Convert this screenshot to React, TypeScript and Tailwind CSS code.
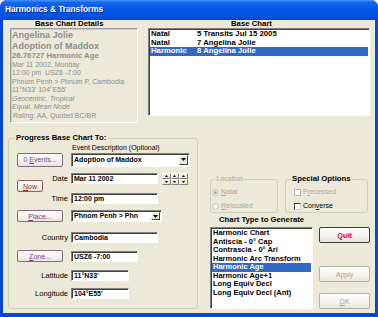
import React from "react";

const sunken =
  "border border-t-[#808080] border-l-[#808080] border-b-white border-r-white shadow-[inset_1px_1px_0_#404040]";

function Arrow() {
  return (
    <div className="w-[9px] h-full shrink-0 bg-[#ECE9D8] border border-t-white border-l-white border-b-[#404040] border-r-[#404040] flex items-center justify-center">
      <svg width="5" height="3" viewBox="0 0 5 3">
        <path d="M0 0H5L2.5 3Z" fill="#000" />
      </svg>
    </div>
  );
}

function Spin({ up }: { up: boolean }) {
  return (
    <div className="bg-[#ECE9D8] border border-t-white border-l-white border-b-[#808080] border-r-[#808080] flex items-center justify-center">
      <svg width="3" height="2" viewBox="0 0 3 2">
        <path d={up ? "M0 2H3L1.5 0Z" : "M0 0H3L1.5 2Z"} fill="#000" />
      </svg>
    </div>
  );
}

function Field({ cls, children }: { cls: string; children: React.ReactNode }) {
  return (
    <div
      className={`${cls} h-[11px] bg-white ${sunken} text-[7px] font-bold leading-[9px] pl-[2px] whitespace-nowrap overflow-hidden text-black`}
    >
      {children}
    </div>
  );
}

function Btn({ cls, children }: { cls: string; children: React.ReactNode }) {
  return (
    <div
      className={`${cls} shrink-0 flex items-center justify-center rounded-[2px] border text-[7px] leading-none bg-[linear-gradient(180deg,#fefefd_0%,#f4f3ee_60%,#e6e4da_100%)]`}
    >
      <span className="whitespace-pre">{children}</span>
    </div>
  );
}

function Label({ cls, children }: { cls: string; children: React.ReactNode }) {
  return (
    <div className={`${cls} shrink-0 text-right text-[7.5px] leading-[8px] text-black whitespace-nowrap`}>
      {children}
    </div>
  );
}

const chartTypes = [
  "Harmonic Chart",
  "Antiscia - 0° Cap",
  "Contrascia - 0° Ari",
  "Harmonic Arc Transform",
  "Harmonic Age",
  "Harmonic Age+1",
  "Long Equiv Decl",
  "Long Equiv Decl (Ant)",
];

const baseCharts = [
  ["Natal", "5 Transits Jul 15 2005"],
  ["Natal", "7 Angelina Jolie"],
  ["Harmonic", "8 Angelina Jolie"],
];

export default function App() {
  return (
    <div className="w-[378px] h-[317px] flex flex-col bg-[#0a46d6] rounded-t-[7px] overflow-hidden font-['Liberation_Sans',Arial,sans-serif]">
      {/* title bar */}
      <div className="h-[20px] shrink-0 flex items-center pl-[5px] bg-[linear-gradient(180deg,#4a97fb_0%,#1467ee_12%,#0558e8_45%,#0453e2_80%,#0a44c8_100%)]">
        <span className="text-white font-bold text-[8.25px] leading-none [text-shadow:1px_1px_0_#0b2a8a]">
          Harmonics &amp; Transforms
        </span>
      </div>

      {/* body */}
      <div className="flex-1 mx-[3px] mb-[4px] bg-[#ECE9D8] flex flex-col text-black">
        {/* top section */}
        <div className="flex">
          <div className="ml-[7px] w-[128px] shrink-0">
            <div className="h-[8px] leading-[8px] text-[7.75px] font-bold pl-[25px] whitespace-nowrap">
              Base Chart Details
            </div>
            <div className="h-[95px] border border-t-[#9d9d9d] border-l-[#9d9d9d] border-b-white border-r-white shadow-[inset_1px_1px_0_#c9c7b8] pt-[1px] pl-[1px] text-[#8e8e8e] whitespace-nowrap overflow-hidden">
              <div className="text-[9px] font-bold leading-[11px]">Angelina Jolie</div>
              <div className="text-[9px] font-bold leading-[11px]">Adoption of Maddox</div>
              <div className="text-[7.75px] font-bold leading-[8.5px]">26.76727 Harmonic Age</div>
              <div className="text-[7px] leading-[8.5px]">Mar 11 2002, Monday</div>
              <div className="text-[7px] leading-[8.5px] whitespace-pre">12:00 pm  USZ6 -7:00</div>
              <div className="text-[7px] leading-[8.5px]">Phnom Penh &gt; Phnum P, Cambodia</div>
              <div className="text-[7px] leading-[8.5px]">11°N33' 104°E55'</div>
              <div className="text-[7px] leading-[8.5px] italic">Geocentric, Tropical</div>
              <div className="text-[7px] leading-[8.5px] italic">Equal, Mean Node</div>
              <div className="text-[7px] leading-[8.5px] pl-[1px]">Rating: AA, Quoted BC/BR</div>
            </div>
          </div>

          <div className="ml-[10px] w-[222px] shrink-0">
            <div className="h-[8px] leading-[8px] text-[7.75px] font-bold pl-[83px] whitespace-nowrap">
              Base Chart
            </div>
            <div className={`h-[88px] bg-white ${sunken} p-[1px]`}>
              {baseCharts.map(([a, b], i) => (
                <div
                  key={i}
                  className={`flex h-[8.5px] leading-[8.5px] text-[7.75px] font-bold whitespace-nowrap ${
                    i === 2 ? "bg-[#316ac5] text-white" : "text-black"
                  }`}
                >
                  <div className="w-[47px] pl-[1px] shrink-0">{a}</div>
                  <div>{b}</div>
                </div>
              ))}
            </div>
          </div>
        </div>

        {/* bottom section */}
        <div className="flex items-start mt-[11px]">
          <fieldset className="ml-[5px] w-[190px] h-[175px] shrink-0 border border-[#d0d0bf] rounded-[3px]">
            <legend className="ml-[5px] px-[2px] text-[7.75px] font-bold leading-[8px] whitespace-nowrap">
              Progress Base Chart To:
            </legend>

            <div className="mt-[2px] ml-[63px] text-[7px] leading-[8px] whitespace-nowrap">
              Event Description (Optional)
            </div>

            <div className="flex items-center h-[15px]">
              <Btn cls="ml-[8px] w-[46px] h-[14px] border-[#7d6f80] text-[#7e3a86]">
                0 <span className="underline">E</span>vents...
              </Btn>
              <div className={`ml-[8px] w-[119px] h-[14px] bg-white ${sunken} flex items-stretch p-[1px]`}>
                <div className="flex-1 text-[7px] font-bold leading-[10px] pl-[1px] whitespace-nowrap overflow-hidden">
                  Adoption of Maddox
                </div>
                <Arrow />
              </div>
            </div>

            <div className="flex mt-[6px]">
              <div className="w-[35px] shrink-0">
                <Btn cls="ml-[8px] mt-[7px] w-[26px] h-[12px] border-[#9a5a50] text-[#9b2a30]">
                  <span className="underline">N</span>ow
                </Btn>
              </div>
              <div className="flex flex-col">
                <div className="flex items-center h-[11px]">
                  <Label cls="w-[24px]">Date</Label>
                  <Field cls="ml-[3px] w-[87px]">Mar 11 2002</Field>
                  <div className="ml-[4px] w-[26px] h-[12px] grid grid-cols-3 grid-rows-2">
                    <Spin up />
                    <Spin up />
                    <Spin up />
                    <Spin up={false} />
                    <Spin up={false} />
                    <Spin up={false} />
                  </div>
                </div>
                <div className="flex items-center h-[11px] mt-[9px]">
                  <Label cls="w-[24px]">Time</Label>
                  <Field cls="ml-[3px] w-[87px]">12:00 pm</Field>
                </div>
              </div>
            </div>

            <div className="flex items-center h-[12px] mt-[6px]">
              <Btn cls="ml-[8px] w-[46px] h-[12px] border-[#7d6f80] text-[#7e3a86]">
                <span className="underline">P</span>lace...
              </Btn>
              <div className={`ml-[8px] w-[91px] h-[12px] bg-white ${sunken} flex items-stretch p-[1px]`}>
                <div className="flex-1 text-[7px] font-bold leading-[8px] pl-[1px] whitespace-nowrap overflow-hidden">
                  Phnom Penh &gt; Phn
                </div>
                <Arrow />
              </div>
            </div>

            <div className="flex items-center h-[11px] mt-[10px]">
              <Label cls="w-[59px]">Country</Label>
              <Field cls="ml-[3px] w-[87px]">Cambodia</Field>
            </div>

            <div className="flex items-center h-[12px] mt-[7px]">
              <Btn cls="ml-[8px] w-[46px] h-[12px] border-[#7d6f80] text-[#7e3a86]">
                <span className="underline">Z</span>one...
              </Btn>
              <Field cls="ml-[8px] w-[67px]">USZ6 -7:00</Field>
            </div>

            <div className="flex items-center h-[11px] mt-[8px]">
              <Label cls="w-[59px]">Latitude</Label>
              <Field cls="ml-[3px] w-[58px]">11°N33'</Field>
            </div>

            <div className="flex items-center h-[11px] mt-[7px]">
              <Label cls="w-[59px]">Longitude</Label>
              <Field cls="ml-[3px] w-[58px]">104°E55'</Field>
            </div>
          </fieldset>

          <div className="ml-[12px] w-[160px] shrink-0 flex flex-col">
            <div className="flex mt-[41px]">
              <fieldset className="w-[68px] h-[38px] shrink-0 border border-[#d0d0bf] rounded-[3px]">
                <legend className="ml-[4px] px-[1.5px] text-[7px] leading-[8px] text-[#aca899] whitespace-nowrap">
                  Location
                </legend>
                <div className="flex items-center h-[8px] mt-[5px] pl-[1px] gap-[2px] text-[7px] text-[#aca899]">
                  <div className="w-[7px] h-[7px] rounded-full border border-[#c4c2b4] bg-[#f4f3ee] flex items-center justify-center">
                    <div className="w-[3px] h-[3px] rounded-full bg-[#aca899]" />
                  </div>
                  <span>
                    <span className="underline">N</span>atal
                  </span>
                </div>
                <div className="flex items-center h-[8px] mt-[6px] pl-[1px] gap-[2px] text-[7px] text-[#aca899]">
                  <div className="w-[7px] h-[7px] rounded-full border border-[#c4c2b4] bg-[#f4f3ee]" />
                  <span>
                    <span className="underline">R</span>elocated
                  </span>
                </div>
              </fieldset>

              <fieldset className="ml-[7px] w-[83px] h-[38px] shrink-0 border border-[#d0d0bf] rounded-[3px]">
                <legend className="ml-[5px] px-[1px] text-[7.75px] font-bold leading-[8px] whitespace-nowrap">
                  Special Options
                </legend>
                <div className="flex items-center h-[8px] mt-[5px] pl-[8px] gap-[2px] text-[7px] text-[#aca899]">
                  <div className="w-[7px] h-[7px] border border-[#b8b6a8] bg-white" />
                  <span>
                    P<span className="underline">r</span>ecessed
                  </span>
                </div>
                <div className="flex items-center h-[8px] mt-[6px] pl-[8px] gap-[2px] text-[7px] text-black">
                  <div className="w-[7px] h-[7px] border border-t-[#404040] border-l-[#404040] border-b-[#d4d0c8] border-r-[#d4d0c8] bg-white" />
                  <span>
                    Con<span className="underline">v</span>erse
                  </span>
                </div>
              </fieldset>
            </div>

            <div className="mt-[3px] h-[8px] leading-[8px] pl-[9px] text-[7.75px] font-bold whitespace-nowrap">
              Chart Type to Generate
            </div>

            <div className="flex mt-[3px]">
              <div className={`w-[103px] h-[82px] shrink-0 bg-white ${sunken} p-[1px]`}>
                {chartTypes.map((t, i) => (
                  <div
                    key={t}
                    className={`h-[8.5px] leading-[8.5px] text-[7.5px] font-bold pl-[1px] whitespace-nowrap ${
                      i === 4 ? "bg-[#316ac5] text-white" : "text-black"
                    }`}
                  >
                    {t}
                  </div>
                ))}
              </div>
              <div className="ml-[6px] w-[51px] flex flex-col">
                <Btn cls="w-[51px] h-[16px] border-[#3c3c3c] text-[#d40000] font-bold text-[7.5px]">Quit</Btn>
                <Btn cls="mt-[23px] w-[51px] h-[16px] border-[#b5b3a4] text-[#aca899]">Apply</Btn>
                <Btn cls="mt-[11px] w-[51px] h-[16px] border-[#b5b3a4] text-[#aca899]">
                  <span className="underline">O</span>K
                </Btn>
              </div>
            </div>
          </div>
        </div>
      </div>
    </div>
  );
}
